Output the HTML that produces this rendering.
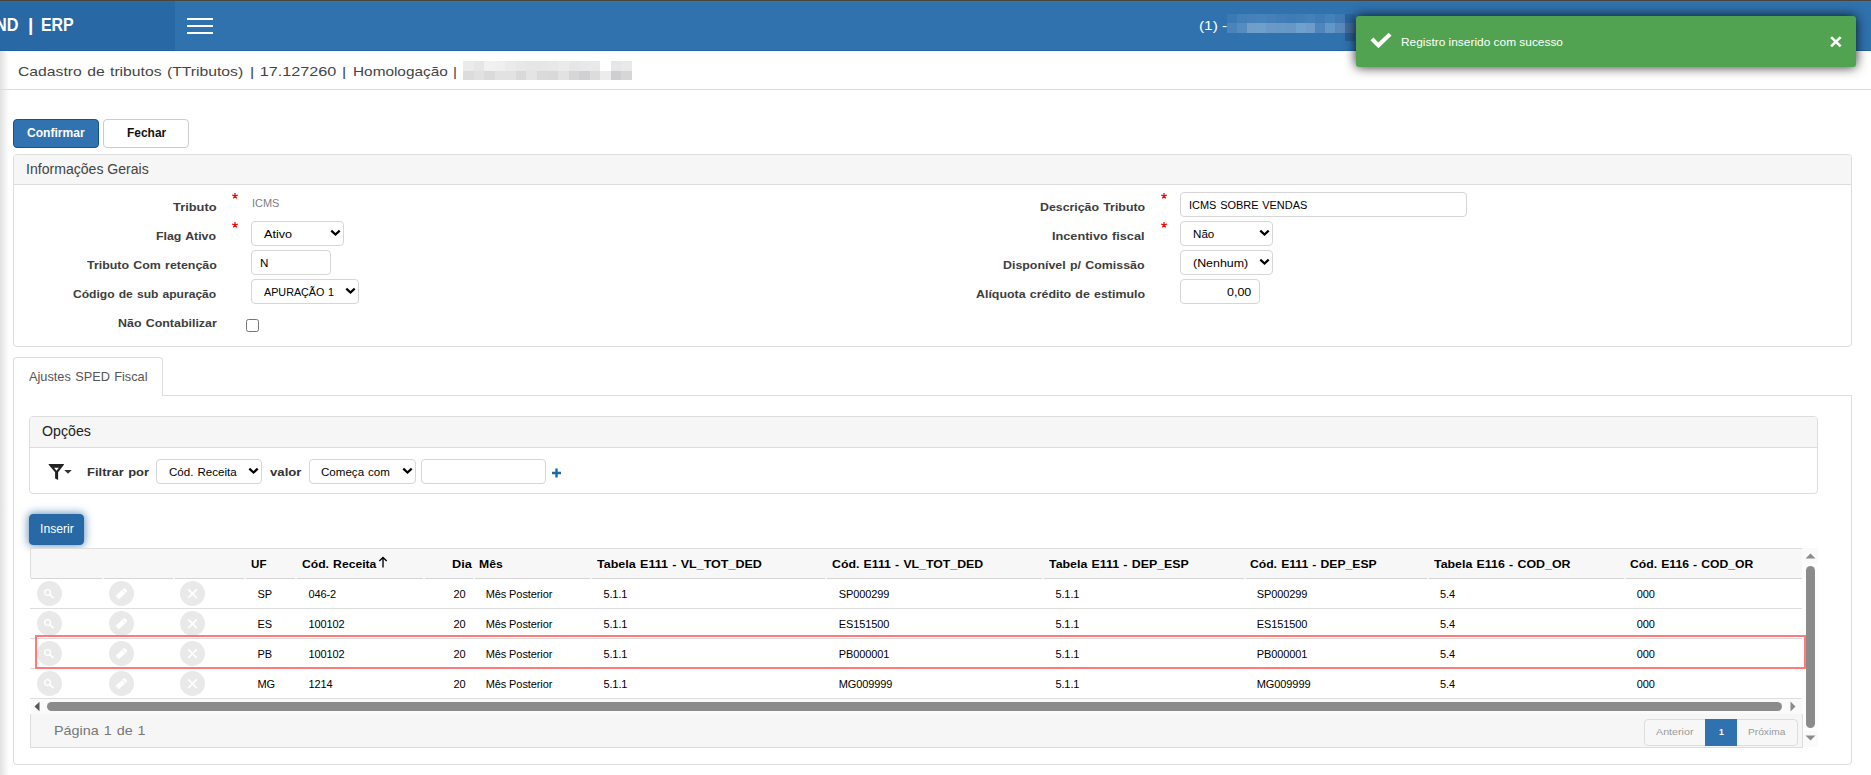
<!DOCTYPE html>
<html lang="pt-br"><head><meta charset="utf-8"><title>Cadastro de tributos</title>
<style>
html,body{margin:0;padding:0}
body{width:1871px;height:775px;position:relative;overflow:hidden;background:#fff;font-family:"Liberation Sans",sans-serif;}
.t{position:absolute;white-space:nowrap;line-height:1;transform-origin:0 0;}
.p{display:inline-block;width:0;height:0;vertical-align:baseline}
.a,.a>*{position:absolute;box-sizing:border-box}
.fld{border:1px solid #d6d6d6;border-radius:4px;background:#fff}
.chev{right:2.5px;top:7.3px}
.panel{border:1px solid #ddd;border-radius:4px;background:#fff}
.phead{left:0;top:0;right:0;background:#f6f6f6;border-bottom:1px solid #ddd;border-radius:3px 3px 0 0}
.circ{width:25px;height:25px;border-radius:50%;background:#e9e9e9}
.rb{height:1px;background:#ddd;left:30px;width:1772px}
.c0{font-size:19px;font-weight:700;color:#fff;}
.c1{font-size:12px;font-weight:400;color:#fff;}
.c2{font-size:11px;font-weight:400;color:#fff;}
.c3{font-size:13.5px;font-weight:400;color:#444;word-spacing:.065em;}
.c4{font-size:12px;font-weight:700;color:#fff;}
.c5{font-size:12px;font-weight:700;color:#111;}
.c6{font-size:14px;font-weight:400;color:#444;}
.c7{font-size:11.5px;font-weight:700;color:#3d3d3d;word-spacing:.065em;}
.c8{font-size:11px;font-weight:400;color:#808080;}
.c9{font-size:11.25px;font-weight:400;color:#000;}
.c10{font-size:11.25px;font-weight:400;color:#000;word-spacing:.065em;}
.c11{font-size:12.2px;font-weight:400;color:#555;word-spacing:.065em;}
.c12{font-size:14px;font-weight:400;color:#222;}
.c13{font-size:11.5px;font-weight:700;color:#333;word-spacing:.065em;}
.c14{font-size:11.5px;font-weight:700;color:#333;}
.c15{font-size:11px;font-weight:700;color:#000;text-shadow:0 1px 0 #fff;word-spacing:.065em;}
.c16{font-size:11px;font-weight:400;color:#000;letter-spacing:-.1px;}
.c17{font-size:13.2px;font-weight:400;color:#777;word-spacing:.065em;}
.c18{font-size:9.5px;font-weight:400;color:#999;}
.c19{font-size:9.5px;font-weight:700;color:#fff;}
</style></head>
<body>
<div class="a" style="left:0;top:51px;width:9px;height:724px;background:linear-gradient(to right,#e1e1e1,#fff)"></div>
<div class="a" style="left:0;top:89px;width:1871px;height:1px;background:#ddd"></div>
<div class="a" style="left:0;top:0;width:1871px;height:51px;background:#3072ae;border-top:1px solid #48443c;border-bottom:1px solid #2566a3"></div>
<div class="a" style="left:0;top:1px;width:175px;height:50px;background:#2868a4;border-bottom:1px solid #1f62a0"></div>
<div class="a" style="left:0;top:1px;width:1871px;height:1px;background:rgba(40,130,210,.35)"></div>
<div class="a" style="left:187px;top:17.6px;width:26px;height:2px;background:#fff"></div>
<div class="a" style="left:187px;top:24.6px;width:26px;height:2px;background:#fff"></div>
<div class="a" style="left:187px;top:31.8px;width:26px;height:2px;background:#fff"></div>
<div class="a" style="left:1227px;top:14px;width:128px;height:27px"><div style="left:0.0px;top:0;width:10.12px;height:9.2px;background:#3a79b4"></div><div style="left:0.0px;top:9px;width:10.12px;height:9.8px;background:#4a83bb"></div><div style="left:9.82px;top:0;width:10.12px;height:9.2px;background:#437fb8"></div><div style="left:9.82px;top:9px;width:10.12px;height:9.8px;background:#568bbf"></div><div style="left:19.63px;top:0;width:10.12px;height:9.2px;background:#4781ba"></div><div style="left:19.63px;top:9px;width:10.12px;height:9.8px;background:#709dca"></div><div style="left:29.45px;top:0;width:10.12px;height:9.2px;background:#4782ba"></div><div style="left:29.45px;top:9px;width:10.12px;height:9.8px;background:#6fa0cb"></div><div style="left:39.26px;top:0;width:10.12px;height:9.2px;background:#4680b9"></div><div style="left:39.26px;top:9px;width:10.12px;height:9.8px;background:#6b98c7"></div><div style="left:49.08px;top:0;width:10.12px;height:9.2px;background:#427db7"></div><div style="left:49.08px;top:9px;width:10.12px;height:9.8px;background:#6799c6"></div><div style="left:58.89px;top:0;width:10.12px;height:9.2px;background:#3f7bb6"></div><div style="left:58.89px;top:9px;width:10.12px;height:9.8px;background:#6897c5"></div><div style="left:68.71px;top:0;width:10.12px;height:9.2px;background:#417db7"></div><div style="left:68.71px;top:9px;width:10.12px;height:9.8px;background:#6fa1ce"></div><div style="left:78.52px;top:0;width:10.12px;height:9.2px;background:#4480b9"></div><div style="left:78.52px;top:9px;width:10.12px;height:9.8px;background:#6f9bc9"></div><div style="left:88.34px;top:0;width:10.12px;height:9.2px;background:#3f7cb6"></div><div style="left:88.34px;top:9px;width:10.12px;height:9.8px;background:#4f84bc"></div><div style="left:98.15px;top:0;width:10.12px;height:9.2px;background:#4480b9"></div><div style="left:98.15px;top:9px;width:10.12px;height:9.8px;background:#6397c8"></div><div style="left:107.97px;top:0;width:10.12px;height:9.2px;background:#4079b3"></div><div style="left:107.97px;top:9px;width:10.12px;height:9.8px;background:#5a88bd"></div><div style="left:117.78px;top:0;width:10.12px;height:9.2px;background:#2b659c"></div><div style="left:117.78px;top:9px;width:10.12px;height:9.8px;background:#426c99"></div><div style="left:117.78px;top:18.8px;width:10.12px;height:8px;background:#285f96"></div></div>
<div class="a" style="left:463px;top:61px;width:169px;height:19px"><div style="left:0.0px;top:0;width:10.86px;height:10px;background:#ebebeb"></div><div style="left:0.0px;top:9.5px;width:10.86px;height:9.5px;background:#dcdcdc"></div><div style="left:10.56px;top:0;width:10.86px;height:10px;background:#e6e6e6"></div><div style="left:10.56px;top:9.5px;width:10.86px;height:9.5px;background:#e1e1e1"></div><div style="left:21.12px;top:0;width:10.86px;height:10px;background:#f1f1f1"></div><div style="left:21.12px;top:9.5px;width:10.86px;height:9.5px;background:#dadada"></div><div style="left:31.69px;top:0;width:10.86px;height:10px;background:#efefef"></div><div style="left:31.69px;top:9.5px;width:10.86px;height:9.5px;background:#e2e2e2"></div><div style="left:42.25px;top:0;width:10.86px;height:10px;background:#ebebeb"></div><div style="left:42.25px;top:9.5px;width:10.86px;height:9.5px;background:#e2e2e2"></div><div style="left:52.81px;top:0;width:10.86px;height:10px;background:#e8e8e8"></div><div style="left:52.81px;top:9.5px;width:10.86px;height:9.5px;background:#d9d9d9"></div><div style="left:63.38px;top:0;width:10.86px;height:10px;background:#e6e6e6"></div><div style="left:63.38px;top:9.5px;width:10.86px;height:9.5px;background:#e4e4e2"></div><div style="left:73.94px;top:0;width:10.86px;height:10px;background:#e6e6e6"></div><div style="left:73.94px;top:9.5px;width:10.86px;height:9.5px;background:#dadada"></div><div style="left:84.5px;top:0;width:10.86px;height:10px;background:#e8e8e8"></div><div style="left:84.5px;top:9.5px;width:10.86px;height:9.5px;background:#d9d9d9"></div><div style="left:95.06px;top:0;width:10.86px;height:10px;background:#ebebeb"></div><div style="left:95.06px;top:9.5px;width:10.86px;height:9.5px;background:#e2e2e2"></div><div style="left:105.62px;top:0;width:10.86px;height:10px;background:#e6e6e6"></div><div style="left:105.62px;top:9.5px;width:10.86px;height:9.5px;background:#d6d6d6"></div><div style="left:116.19px;top:0;width:10.86px;height:10px;background:#e8e8e8"></div><div style="left:116.19px;top:9.5px;width:10.86px;height:9.5px;background:#d0d0d2"></div><div style="left:126.75px;top:0;width:10.86px;height:10px;background:#e9e9eb"></div><div style="left:126.75px;top:9.5px;width:10.86px;height:9.5px;background:#dcdcdc"></div><div style="left:137.31px;top:0;width:10.86px;height:10px;background:#fff"></div><div style="left:137.31px;top:9.5px;width:10.86px;height:9.5px;background:#ececec"></div><div style="left:147.88px;top:0;width:10.86px;height:10px;background:#e6e6e6"></div><div style="left:147.88px;top:9.5px;width:10.86px;height:9.5px;background:#cfcdcf"></div><div style="left:158.44px;top:0;width:10.86px;height:10px;background:#e9e9e9"></div><div style="left:158.44px;top:9.5px;width:10.86px;height:9.5px;background:#d6d6d8"></div></div>
<div class="a" style="left:13px;top:119px;width:86px;height:29px;background:#3173b0;border:1px solid #115394;border-radius:4px"></div>
<div class="a" style="left:103px;top:119px;width:86px;height:29px;background:#fff;border:1px solid #ccc;border-radius:4px"></div>
<div class="a panel" style="left:13px;top:154px;width:1839px;height:193px"><div class="phead" style="height:30px"></div></div>
<svg class="a" style="left:230.5px;top:192.2px" width="8" height="8" viewBox="-4 -4 8 8"><path d="M0 0 L0.00 -3.00 M0 0 L2.76 -0.93 M0 0 L1.70 2.43 M0 0 L-1.70 2.43 M0 0 L-2.76 -0.93" stroke="#f00" stroke-width="1.25" fill="none"/></svg>
<svg class="a" style="left:230.5px;top:220.9px" width="8" height="8" viewBox="-4 -4 8 8"><path d="M0 0 L0.00 -3.00 M0 0 L2.76 -0.93 M0 0 L1.70 2.43 M0 0 L-1.70 2.43 M0 0 L-2.76 -0.93" stroke="#f00" stroke-width="1.25" fill="none"/></svg>
<svg class="a" style="left:1159.6px;top:192.2px" width="8" height="8" viewBox="-4 -4 8 8"><path d="M0 0 L0.00 -3.00 M0 0 L2.76 -0.93 M0 0 L1.70 2.43 M0 0 L-1.70 2.43 M0 0 L-2.76 -0.93" stroke="#f00" stroke-width="1.25" fill="none"/></svg>
<svg class="a" style="left:1159.6px;top:220.9px" width="8" height="8" viewBox="-4 -4 8 8"><path d="M0 0 L0.00 -3.00 M0 0 L2.76 -0.93 M0 0 L1.70 2.43 M0 0 L-1.70 2.43 M0 0 L-2.76 -0.93" stroke="#f00" stroke-width="1.25" fill="none"/></svg>
<div class="a fld" style="left:251px;top:221px;width:93px;height:25px"><svg class="chev" width="11" height="8" viewBox="0 0 11 8"><path d="M1.3 1.6 L5.5 5.6 L9.7 1.6" stroke="#000" stroke-width="2.2" fill="none"/></svg></div>
<div class="a fld" style="left:251px;top:250px;width:80px;height:25px"></div>
<div class="a fld" style="left:251px;top:279px;width:108px;height:25px"><svg class="chev" width="11" height="8" viewBox="0 0 11 8"><path d="M1.3 1.6 L5.5 5.6 L9.7 1.6" stroke="#000" stroke-width="2.2" fill="none"/></svg></div>
<div class="a" style="left:246px;top:319px;width:13px;height:13px;border:1px solid #767676;border-radius:2.5px;background:#fff"></div>
<div class="a fld" style="left:1180px;top:192px;width:287px;height:25px"></div>
<div class="a fld" style="left:1180px;top:221px;width:93px;height:25px"><svg class="chev" width="11" height="8" viewBox="0 0 11 8"><path d="M1.3 1.6 L5.5 5.6 L9.7 1.6" stroke="#000" stroke-width="2.2" fill="none"/></svg></div>
<div class="a fld" style="left:1180px;top:250px;width:93px;height:25px"><svg class="chev" width="11" height="8" viewBox="0 0 11 8"><path d="M1.3 1.6 L5.5 5.6 L9.7 1.6" stroke="#000" stroke-width="2.2" fill="none"/></svg></div>
<div class="a fld" style="left:1180px;top:279px;width:80px;height:25px"></div>
<div class="a" style="left:13px;top:395px;width:1839px;height:370px;border:1px solid #ddd;border-radius:0 0 4px 4px"></div>
<div class="a" style="left:13px;top:357px;width:150px;height:39px;border:1px solid #ddd;border-bottom:0;border-radius:4px 4px 0 0;background:#fff"></div>
<div class="a panel" style="left:29px;top:416px;width:1789px;height:78px"><div class="phead" style="height:31px"></div></div>
<svg class="a" style="left:48px;top:463px" width="25" height="18" viewBox="0 0 25 18"><path d="M0.7 1 H15.9 V1.7 L10.1 9.3 V16.9 L7.1 15.6 V9.3 L0.7 1.7 Z M6.1 4.7 L8.5 7.8 L10.9 4.7 Z" fill="#222" fill-rule="evenodd"/><path d="M16.2 7.1 H23.8 L20 10.8 Z" fill="#333"/></svg>
<div class="a fld" style="left:156px;top:459px;width:106px;height:25px"><svg class="chev" width="11" height="8" viewBox="0 0 11 8"><path d="M1.3 1.6 L5.5 5.6 L9.7 1.6" stroke="#000" stroke-width="2.2" fill="none"/></svg></div>
<div class="a fld" style="left:309px;top:459px;width:107px;height:25px"><svg class="chev" width="11" height="8" viewBox="0 0 11 8"><path d="M1.3 1.6 L5.5 5.6 L9.7 1.6" stroke="#000" stroke-width="2.2" fill="none"/></svg></div>
<div class="a fld" style="left:421px;top:459px;width:125px;height:25px"></div>
<svg class="a" style="left:552px;top:468px" width="10" height="10" viewBox="0 0 10 10"><path d="M4.5 0.5 V9.5 M0 5 H9" stroke="#1b6aa5" stroke-width="2.4" fill="none"/></svg>
<div class="a" style="left:29px;top:514px;width:55px;height:31px;background:#2868a4;border:1px solid #2766a2;border-radius:4px;box-shadow:0 0 8px 1px rgba(40,104,164,.7)"></div>
<div class="a" style="left:30px;top:548px;width:1772px;height:30px;background:#f7f7f7;border-top:1px solid #ddd;border-left:1px solid #ddd"></div>
<div class="a" style="left:31px;top:578px;width:1771px;height:1px;background:#d6d6d6"></div>
<div class="a" style="left:102px;top:578px;width:1.5px;height:1px;background:#f4f4f4"></div>
<div class="a" style="left:173px;top:578px;width:1.5px;height:1px;background:#f4f4f4"></div>
<div class="a" style="left:244px;top:578px;width:1.5px;height:1px;background:#f4f4f4"></div>
<div class="a" style="left:295px;top:578px;width:1.5px;height:1px;background:#f4f4f4"></div>
<div class="a" style="left:423px;top:578px;width:1.5px;height:1px;background:#f4f4f4"></div>
<div class="a" style="left:473px;top:578px;width:1.5px;height:1px;background:#f4f4f4"></div>
<div class="a" style="left:590px;top:578px;width:1.5px;height:1px;background:#f4f4f4"></div>
<div class="a" style="left:825px;top:578px;width:1.5px;height:1px;background:#f4f4f4"></div>
<div class="a" style="left:1042px;top:578px;width:1.5px;height:1px;background:#f4f4f4"></div>
<div class="a" style="left:1244px;top:578px;width:1.5px;height:1px;background:#f4f4f4"></div>
<div class="a" style="left:1427px;top:578px;width:1.5px;height:1px;background:#f4f4f4"></div>
<div class="a" style="left:1624px;top:578px;width:1.5px;height:1px;background:#f4f4f4"></div>
<div class="a rb" style="top:608px"></div>
<div class="a rb" style="top:638px"></div>
<div class="a rb" style="top:668px"></div>
<div class="a rb" style="top:698px"></div>
<div class="a circ" style="left:37px;top:581px"><svg width="25" height="25" viewBox="0 0 25 25"><circle cx="10.6" cy="11.5" r="2.9" stroke="#fff" stroke-width="1.4" fill="none"/><path d="M12.8 13.7 L16.6 17.2" stroke="#fff" stroke-width="1.7" fill="none"/></svg></div>
<div class="a circ" style="left:109px;top:581px"><svg width="25" height="25" viewBox="0 0 25 25"><g transform="rotate(-43 12.5 12.5)"><rect x="6.2" y="10.3" width="12.4" height="4.6" rx="1.2" fill="#fff"/><path d="M15.6 10.3 V14.9" stroke="#e9e9e9" stroke-width="0.9"/><path d="M6.9 11 V14.2" stroke="#e9e9e9" stroke-width="0.7"/></g></svg></div>
<div class="a circ" style="left:180px;top:581px"><svg width="25" height="25" viewBox="0 0 25 25"><path d="M8.2 8.4 L16.8 17 M16.8 8.4 L8.2 17" stroke="#fff" stroke-width="1.7" fill="none"/></svg></div>
<div class="a circ" style="left:37px;top:611px"><svg width="25" height="25" viewBox="0 0 25 25"><circle cx="10.6" cy="11.5" r="2.9" stroke="#fff" stroke-width="1.4" fill="none"/><path d="M12.8 13.7 L16.6 17.2" stroke="#fff" stroke-width="1.7" fill="none"/></svg></div>
<div class="a circ" style="left:109px;top:611px"><svg width="25" height="25" viewBox="0 0 25 25"><g transform="rotate(-43 12.5 12.5)"><rect x="6.2" y="10.3" width="12.4" height="4.6" rx="1.2" fill="#fff"/><path d="M15.6 10.3 V14.9" stroke="#e9e9e9" stroke-width="0.9"/><path d="M6.9 11 V14.2" stroke="#e9e9e9" stroke-width="0.7"/></g></svg></div>
<div class="a circ" style="left:180px;top:611px"><svg width="25" height="25" viewBox="0 0 25 25"><path d="M8.2 8.4 L16.8 17 M16.8 8.4 L8.2 17" stroke="#fff" stroke-width="1.7" fill="none"/></svg></div>
<div class="a circ" style="left:37px;top:641px"><svg width="25" height="25" viewBox="0 0 25 25"><circle cx="10.6" cy="11.5" r="2.9" stroke="#fff" stroke-width="1.4" fill="none"/><path d="M12.8 13.7 L16.6 17.2" stroke="#fff" stroke-width="1.7" fill="none"/></svg></div>
<div class="a circ" style="left:109px;top:641px"><svg width="25" height="25" viewBox="0 0 25 25"><g transform="rotate(-43 12.5 12.5)"><rect x="6.2" y="10.3" width="12.4" height="4.6" rx="1.2" fill="#fff"/><path d="M15.6 10.3 V14.9" stroke="#e9e9e9" stroke-width="0.9"/><path d="M6.9 11 V14.2" stroke="#e9e9e9" stroke-width="0.7"/></g></svg></div>
<div class="a circ" style="left:180px;top:641px"><svg width="25" height="25" viewBox="0 0 25 25"><path d="M8.2 8.4 L16.8 17 M16.8 8.4 L8.2 17" stroke="#fff" stroke-width="1.7" fill="none"/></svg></div>
<div class="a circ" style="left:37px;top:671px"><svg width="25" height="25" viewBox="0 0 25 25"><circle cx="10.6" cy="11.5" r="2.9" stroke="#fff" stroke-width="1.4" fill="none"/><path d="M12.8 13.7 L16.6 17.2" stroke="#fff" stroke-width="1.7" fill="none"/></svg></div>
<div class="a circ" style="left:109px;top:671px"><svg width="25" height="25" viewBox="0 0 25 25"><g transform="rotate(-43 12.5 12.5)"><rect x="6.2" y="10.3" width="12.4" height="4.6" rx="1.2" fill="#fff"/><path d="M15.6 10.3 V14.9" stroke="#e9e9e9" stroke-width="0.9"/><path d="M6.9 11 V14.2" stroke="#e9e9e9" stroke-width="0.7"/></g></svg></div>
<div class="a circ" style="left:180px;top:671px"><svg width="25" height="25" viewBox="0 0 25 25"><path d="M8.2 8.4 L16.8 17 M16.8 8.4 L8.2 17" stroke="#fff" stroke-width="1.7" fill="none"/></svg></div>
<svg class="a" style="left:378px;top:556px" width="10" height="12" viewBox="0 0 10 12"><path d="M5 11.4 V1.6 M1.3 5 L5 1.4 L8.7 5" stroke="#000" stroke-width="1.35" fill="none"/></svg>
<div class="a" style="left:31px;top:699px;width:1771px;height:15px;background:#fafafa"><div style="left:16px;top:3px;width:1735px;height:9px;border-radius:5px;background:#8b8b8b"></div><svg style="left:2.6px;top:2px" width="6" height="11" viewBox="0 0 6 11"><path d="M5.5 0.7 V10.3 L0.5 5.5 Z" fill="#585858"/></svg><svg style="left:1759px;top:2px" width="6" height="11" viewBox="0 0 6 11"><path d="M0.5 0.5 V10.5 L5.5 5.5 Z" fill="#8b8b8b"/></svg></div>
<div class="a" style="left:1802px;top:548px;width:16px;height:199px;background:#fdfdfd"><div style="left:0;top:0;width:16px;height:16px;background:#fafafa"></div><div style="left:0;top:183px;width:16px;height:16px;background:#fafafa"></div><div style="left:4px;top:18px;width:9px;height:162px;border-radius:5px;background:#8b8b8b"></div><svg style="left:3px;top:5.3px" width="11" height="6" viewBox="0 0 11 6"><path d="M0.5 5.5 H10.5 L5.5 0.5 Z" fill="#8b8b8b"/></svg><svg style="left:3px;top:187px" width="11" height="6" viewBox="0 0 11 6"><path d="M0.5 0.5 H10.5 L5.5 5.5 Z" fill="#8b8b8b"/></svg></div>
<div class="a" style="left:35px;top:635px;width:1771px;height:34px;border:2px solid #ff7a7a"></div>
<div class="a" style="left:30px;top:714px;width:1773px;height:34px;background:#f6f6f6;border:1px solid #ddd;border-top:0"></div>
<div class="a" style="left:1644px;top:719px;width:154px;height:27px;border:1px solid #ddd;border-radius:4px;background:#f7f7f7"><div style="left:60px;top:-1px;width:32px;height:27px;background:#3072af"></div></div>
<div class="a" style="left:1356px;top:16px;width:500px;height:51px;background:#51a351;border-radius:3px;box-shadow:0 0 12px rgba(0,0,0,.85)"><svg style="left:12px;top:14px" width="26" height="22" viewBox="0 0 26 22"><path d="M2.4 10.3 L5.4 7.5 L10.4 12.4 L20.6 2.7 L23.6 5.6 L10.4 18.2 Z" fill="#fff"/></svg><svg style="left:473px;top:19px" width="14" height="14" viewBox="0 0 14 14"><path d="M2.1 2.1 L11.6 11.4 M11.6 2.1 L2.1 11.4" stroke="#fff" stroke-width="2.7" fill="none"/></svg></div>
<span class="t c0" style="left:-4.89px;top:14.8px;transform:scaleX(0.856)">ND</span>
<span class="t c0" style="left:28.1px;top:14.8px">|</span>
<span class="t c0" style="left:41.22px;top:14.8px;transform:scaleX(0.8368)">ERP</span>
<span class="t c1" style="left:1198.56px;top:19.8px;transform:scaleX(1.2818)">(1) -</span>
<span class="t c2" style="left:1401.16px;top:36.9px;transform:scaleX(1.0815)">Registro inserido com sucesso</span>
<span class="t c3" style="left:17.82px;top:65px;transform:scaleX(1.1641)">Cadastro de tributos (TTributos)</span>
<span class="t c3" style="left:249.7px;top:65px;transform:scaleX(1.1998)">| 17.127260 |</span>
<span class="t c3" style="left:352.83px;top:65px;transform:scaleX(1.1374)">Homologação |</span>
<span class="t c4" style="left:27.1px;top:127px;transform:scaleX(1.0045)">Confirmar</span>
<span class="t c5" style="left:126.5px;top:127px;transform:scaleX(0.996)">Fechar</span>
<span class="t c6" style="left:25.6px;top:162px;transform:scaleX(1.0051)">Informações Gerais</span>
<span class="t c7" style="left:172.99px;top:202.2px;transform:scaleX(1.1163)">Tributo</span>
<span class="t c7" style="left:156.49px;top:231.1px;transform:scaleX(1.0732)">Flag Ativo</span>
<span class="t c7" style="left:86.69px;top:260px;transform:scaleX(1.0786)">Tributo Com retenção</span>
<span class="t c7" style="left:73.3px;top:289.1px;transform:scaleX(1.0496)">Código de sub apuração</span>
<span class="t c7" style="left:117.69px;top:318px;transform:scaleX(1.08)">Não Contabilizar</span>
<span class="t c7" style="left:1039.89px;top:201.6px;transform:scaleX(1.0736)">Descrição Tributo</span>
<span class="t c7" style="left:1052.49px;top:230.8px;transform:scaleX(1.1032)">Incentivo fiscal</span>
<span class="t c7" style="left:1003.49px;top:259.9px;transform:scaleX(1.0784)">Disponível p/ Comissão</span>
<span class="t c7" style="left:975.99px;top:288.6px;transform:scaleX(1.0773)">Alíquota crédito de estimulo</span>
<span class="t c8" style="left:251.9px;top:197.7px;transform:scaleX(0.9964)">ICMS</span>
<span class="t c9" style="left:263.64px;top:229px;transform:scaleX(1.1233)">Ativo</span>
<span class="t c9" style="left:260.18px;top:258.2px;transform:scaleX(1.0338)">N</span>
<span class="t c10" style="left:263.92px;top:287.1px;transform:scaleX(0.9568)">APURAÇÃO 1</span>
<span class="t c10" style="left:1188.81px;top:200.2px;transform:scaleX(0.9737)">ICMS SOBRE VENDAS</span>
<span class="t c9" style="left:1192.98px;top:229.4px;transform:scaleX(1.0319)">Não</span>
<span class="t c9" style="left:1192.95px;top:258.1px;transform:scaleX(1.1037)">(Nenhum)</span>
<span class="t c9" style="left:1226.85px;top:287.2px;transform:scaleX(1.1093)">0,00</span>
<span class="t c11" style="left:28.58px;top:370.7px;transform:scaleX(1.0455)">Ajustes SPED Fiscal</span>
<span class="t c12" style="left:41.79px;top:423.6px;transform:scaleX(1.0135)">Opções</span>
<span class="t c13" style="left:87.39px;top:466.8px;transform:scaleX(1.1278)">Filtrar por</span>
<span class="t c10" style="left:168.79px;top:467.2px;transform:scaleX(1.0294)">Cód. Receita</span>
<span class="t c14" style="left:270.49px;top:466.5px;transform:scaleX(1.1455)">valor</span>
<span class="t c10" style="left:321.49px;top:466.5px;transform:scaleX(1.0281)">Começa com</span>
<span class="t c1" style="left:40.19px;top:523px;transform:scaleX(1.0137)">Inserir</span>
<span class="t c15" style="left:250.99px;top:558.9px;transform:scaleX(1.0564)">UF</span>
<span class="t c15" style="left:301.89px;top:558.9px;transform:scaleX(1.1033)">Cód. Receita</span>
<span class="t c15" style="left:452.38px;top:558.9px;transform:scaleX(1.1562)">Dia</span>
<span class="t c15" style="left:479.29px;top:558.9px;transform:scaleX(1.1072)">Mês</span>
<span class="t c15" style="left:596.69px;top:558.9px;transform:scaleX(1.1388)">Tabela E111 - VL_TOT_DED</span>
<span class="t c15" style="left:831.99px;top:558.9px;transform:scaleX(1.1176)">Cód. E111 - VL_TOT_DED</span>
<span class="t c15" style="left:1048.99px;top:558.9px;transform:scaleX(1.1253)">Tabela E111 - DEP_ESP</span>
<span class="t c15" style="left:1250.39px;top:558.9px;transform:scaleX(1.1043)">Cód. E111 - DEP_ESP</span>
<span class="t c15" style="left:1433.59px;top:558.9px;transform:scaleX(1.1266)">Tabela E116 - COD_OR</span>
<span class="t c15" style="left:1630.29px;top:558.9px;transform:scaleX(1.1052)">Cód. E116 - COD_OR</span>
<span class="t c16" style="left:257.4px;top:589px">SP</span>
<span class="t c16" style="left:308.5px;top:589px">046-2</span>
<span class="t c16" style="left:453.4px;top:589px">20</span>
<span class="t c16" style="left:485.7px;top:589px">Mês Posterior</span>
<span class="t c16" style="left:603.4px;top:589px">5.1.1</span>
<span class="t c16" style="left:838.7px;top:589px">SP000299</span>
<span class="t c16" style="left:1055.4px;top:589px">5.1.1</span>
<span class="t c16" style="left:1256.8px;top:589px">SP000299</span>
<span class="t c16" style="left:1440.0px;top:589px">5.4</span>
<span class="t c16" style="left:1636.7px;top:589px">000</span>
<span class="t c16" style="left:257.4px;top:619px">ES</span>
<span class="t c16" style="left:308.5px;top:619px">100102</span>
<span class="t c16" style="left:453.4px;top:619px">20</span>
<span class="t c16" style="left:485.7px;top:619px">Mês Posterior</span>
<span class="t c16" style="left:603.4px;top:619px">5.1.1</span>
<span class="t c16" style="left:838.7px;top:619px">ES151500</span>
<span class="t c16" style="left:1055.4px;top:619px">5.1.1</span>
<span class="t c16" style="left:1256.8px;top:619px">ES151500</span>
<span class="t c16" style="left:1440.0px;top:619px">5.4</span>
<span class="t c16" style="left:1636.7px;top:619px">000</span>
<span class="t c16" style="left:257.4px;top:649px">PB</span>
<span class="t c16" style="left:308.5px;top:649px">100102</span>
<span class="t c16" style="left:453.4px;top:649px">20</span>
<span class="t c16" style="left:485.7px;top:649px">Mês Posterior</span>
<span class="t c16" style="left:603.4px;top:649px">5.1.1</span>
<span class="t c16" style="left:838.7px;top:649px">PB000001</span>
<span class="t c16" style="left:1055.4px;top:649px">5.1.1</span>
<span class="t c16" style="left:1256.8px;top:649px">PB000001</span>
<span class="t c16" style="left:1440.0px;top:649px">5.4</span>
<span class="t c16" style="left:1636.7px;top:649px">000</span>
<span class="t c16" style="left:257.4px;top:679px">MG</span>
<span class="t c16" style="left:308.5px;top:679px">1214</span>
<span class="t c16" style="left:453.4px;top:679px">20</span>
<span class="t c16" style="left:485.7px;top:679px">Mês Posterior</span>
<span class="t c16" style="left:603.4px;top:679px">5.1.1</span>
<span class="t c16" style="left:838.7px;top:679px">MG009999</span>
<span class="t c16" style="left:1055.4px;top:679px">5.1.1</span>
<span class="t c16" style="left:1256.8px;top:679px">MG009999</span>
<span class="t c16" style="left:1440.0px;top:679px">5.4</span>
<span class="t c16" style="left:1636.7px;top:679px">000</span>
<span class="t c17" style="left:53.65px;top:724.3px;transform:scaleX(1.0909)">Página 1 de 1</span>
<span class="t c18" style="left:1655.94px;top:727px;transform:scaleX(1.1273)">Anterior</span>
<span class="t c19" style="left:1718.81px;top:727px;transform:scaleX(0.9062)">1</span>
<span class="t c18" style="left:1748.36px;top:727px;transform:scaleX(1.0705)">Próxima</span>
</body></html>
